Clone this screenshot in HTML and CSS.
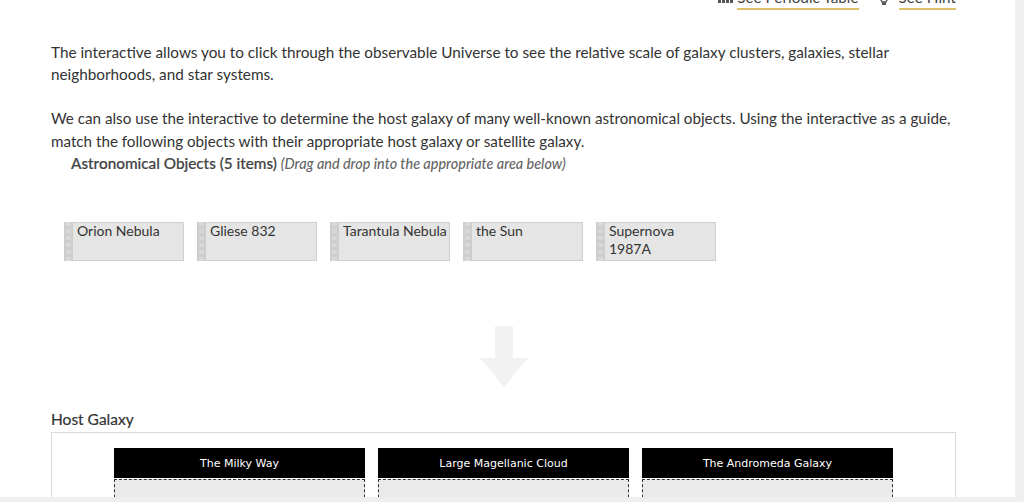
FILE: index.html
```html
<!DOCTYPE html>
<html lang="en">
<head>
    <meta charset="UTF-8">
    <title>Host Galaxy Matching</title>
    <link rel="stylesheet" href="styles.css">
</head>
<body>
    <div class="page">
        <div class="links">
            <span class="link-icon dots"><i></i><i></i><i></i><i></i></span>
            <a class="link">See Periodic Table</a>
            <svg class="link-icon bulb" width="10" height="8" viewBox="0 0 10 8">
                <path d="M1 0 C1 2 3 2.500 3 4 L7 4 C7 2.500 9 2 9 0" fill="none" stroke="#555" stroke-width="1.300"/>
                <rect x="3" y="4.500" width="4" height="2.500" fill="#555"/>
            </svg>
            <a class="link">See Hint</a>
        </div>

        <p class="intro">The interactive allows you to click through the observable Universe to see the relative scale of galaxy clusters, galaxies, stellar neighborhoods, and star systems.</p>
        <p class="intro second">We can also use the interactive to determine the host galaxy of many well-known astronomical objects. Using the interactive as a guide, match the following objects with their appropriate host galaxy or satellite galaxy.</p>

        <div class="items-title">Astronomical Objects (5 items) <em>(Drag and drop into the appropriate area below)</em></div>

        <div class="items">
            <div class="item"><span class="handle"></span><span class="item-text">Orion Nebula</span></div>
            <div class="item"><span class="handle"></span><span class="item-text">Gliese 832</span></div>
            <div class="item"><span class="handle"></span><span class="item-text">Tarantula Nebula</span></div>
            <div class="item"><span class="handle"></span><span class="item-text">the Sun</span></div>
            <div class="item"><span class="handle"></span><span class="item-text">Supernova 1987A</span></div>
        </div>

        <svg class="arrow" width="48" height="61" viewBox="0 0 48 61">
            <path d="M15 0 H33 V32 H48 L24 61 L0 32 H15 Z" fill="#f2f2f2"/>
        </svg>

        <h2 class="host-title">Host Galaxy</h2>
        <div class="host-box">
            <div class="column">
                <div class="column-head">The Milky Way</div>
                <div class="drop"></div>
            </div>
            <div class="column">
                <div class="column-head">Large Magellanic Cloud</div>
                <div class="drop"></div>
            </div>
            <div class="column">
                <div class="column-head">The Andromeda Galaxy</div>
                <div class="drop"></div>
            </div>
        </div>
    </div>
    <div class="bottom-strip"></div>
</body>
</html>
```

FILE: styles.css
```css
/* Page */
html, body {
    margin: 0;
    padding: 0;
    height: 502px;
    overflow: hidden;
}

body {
    font-family: Lato, "Open Sans", sans-serif;
    color: #333;
    background: #efefef;
    position: relative;
}

.page {
    width: 1015px;
    height: 502px;
    box-sizing: border-box;
    padding: 0 59px 0 51px;
    background: #fff;
    overflow: hidden;
}

/* Top links, cut off by the window */
.links {
    display: flex;
    justify-content: flex-end;
    align-items: flex-end;
    height: 10px;
    font-size: 15.300px;
    line-height: 18px;
    color: #444;
}

.link {
    display: block;
    padding-bottom: 2px;
    border-bottom: 2px solid #dfc06a;
    white-space: nowrap;
}

.link-icon {
    flex: none;
}

.dots {
    display: flex;
    gap: 1px;
    margin: 0 4px 7px 0;
}

.dots i {
    width: 3px;
    height: 3px;
    background: #555;
}

.bulb {
    margin: 0 10px 4px 20px;
}

/* Text */
.intro {
    margin: 31px 0 0;
    font-size: 15.300px;
    line-height: 22px;
    color: #333;
}

.intro.second {
    margin-top: 22px;
    font-size: 15.200px;
    line-height: 23px;
}

.items-title {
    margin: 0 0 0 20px;
    font-size: 15.300px;
    line-height: 21px;
    font-weight: 500;
    color: #444;
    -webkit-text-stroke: 0.2px #444;
}

.items-title em {
    font-size: 14.400px;
    color: #666;
    -webkit-text-stroke: 0;
}

/* Draggable items */
.items {
    display: flex;
    gap: 13px;
    margin: 48px 0 0 13px;
}

.item {
    display: flex;
    width: 120px;
    height: 39px;
    box-sizing: border-box;
    border: 1px solid #cfcfcf;
    background: #e5e5e5;
    font-size: 14px;
    line-height: 18px;
    color: #333;
}

.handle {
    flex: none;
    width: 9px;
    margin: -1px 0 -1px -1px;
    background-color: #cdcdcd;
    background-image: repeating-linear-gradient(#d8d8d8 0 4px, transparent 4px 7px);
    background-size: 5px 100%;
    background-position: center;
    background-repeat: no-repeat;
}

.item-text {
    margin-top: -1px;
    padding-left: 4px;
}

.arrow {
    display: block;
    margin: 65px auto 0;
}

/* Host galaxy */
.host-title {
    margin: 21px 0 0;
    font-size: 15.500px;
    line-height: 22px;
    font-weight: 400;
    color: #333;
    -webkit-text-stroke: 0.2px #333;
}

.host-box {
    display: flex;
    gap: 13px;
    margin-top: 2px;
    padding: 15px 0 0 62px;
    height: 80px;
    border: 1px solid #d9d9d9;
}

.column {
    width: 251px;
}

.column-head {
    height: 30px;
    background: #000;
    color: #fff;
    font-family: "DejaVu Sans", sans-serif;
    font-size: 11px;
    line-height: 31px;
    text-align: center;
}

.drop {
    height: 60px;
    margin-top: 1px;
    box-sizing: border-box;
    border: 1px dashed #333;
    background: #eaeaea;
}

.bottom-strip {
    position: absolute;
    left: 0;
    right: 0;
    bottom: 0;
    height: 5px;
    background: #efefef;
}
```
